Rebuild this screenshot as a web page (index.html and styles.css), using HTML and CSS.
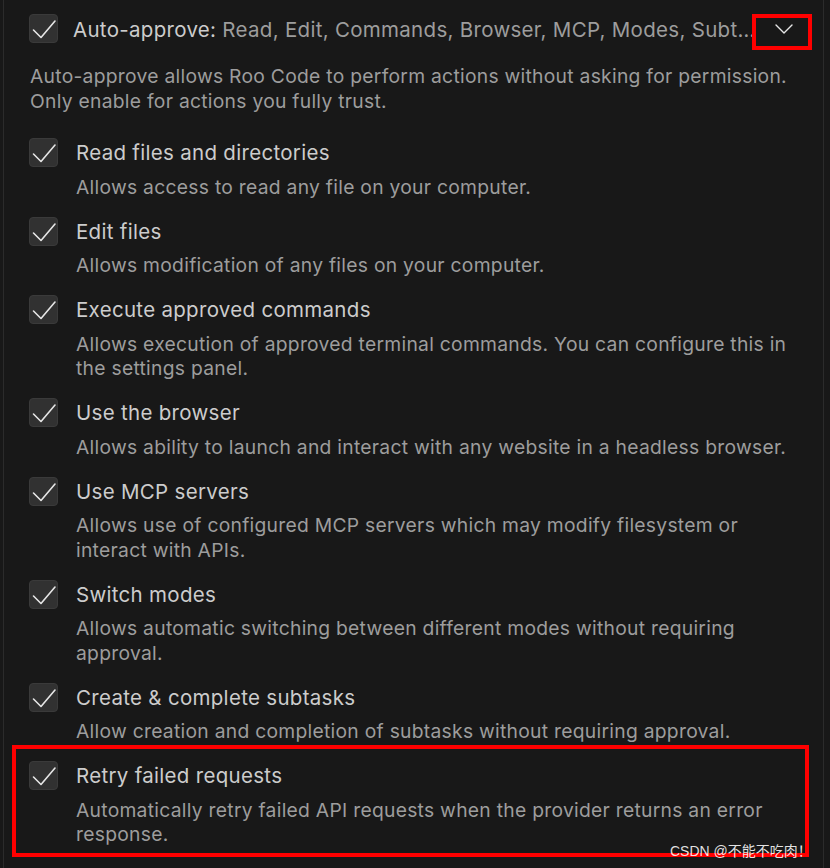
FILE: index.html
```html
<!DOCTYPE html>
<html lang="en">
<head>
<meta charset="utf-8">
<title>Auto-approve</title>
<link rel="stylesheet" href="styles.css">
</head>
<body>
<div class="panel">
  <div class="header">
    <span class="cb"><svg viewBox="0 0 29 29" width="29" height="29"><path d="M4.5 16 L12 23.5 L26 7" fill="none" stroke="#e6e6e6" stroke-width="1.6" stroke-linecap="round" stroke-linejoin="round"/></svg></span>
    <span class="summary"><span class="summary-label">Auto-approve:</span> Read, Edit, Commands, Browser, MCP, Modes, Subtasks, Retry</span>
    <button class="toggle" type="button"><svg viewBox="0 0 18 10" width="18" height="10"><path d="M1 1 L9 9 L17 1" fill="none" stroke="#e6e6e6" stroke-width="1.4" stroke-linecap="round" stroke-linejoin="round"/></svg></button>
  </div>
  <p class="intro">Auto-approve allows Roo Code to perform actions without asking for permission. Only enable for actions you fully trust.</p>
  <ul class="options">
    <li class="option">
      <span class="cb"><svg viewBox="0 0 29 29" width="29" height="29"><path d="M4.5 16 L12 23.5 L26 7" fill="none" stroke="#e6e6e6" stroke-width="1.6" stroke-linecap="round" stroke-linejoin="round"/></svg></span>
      <div class="option-body">
        <div class="option-title">Read files and directories</div>
        <div class="option-desc">Allows access to read any file on your computer.</div>
      </div>
    </li>
    <li class="option">
      <span class="cb"><svg viewBox="0 0 29 29" width="29" height="29"><path d="M4.5 16 L12 23.5 L26 7" fill="none" stroke="#e6e6e6" stroke-width="1.6" stroke-linecap="round" stroke-linejoin="round"/></svg></span>
      <div class="option-body">
        <div class="option-title">Edit files</div>
        <div class="option-desc">Allows modification of any files on your computer.</div>
      </div>
    </li>
    <li class="option">
      <span class="cb"><svg viewBox="0 0 29 29" width="29" height="29"><path d="M4.5 16 L12 23.5 L26 7" fill="none" stroke="#e6e6e6" stroke-width="1.6" stroke-linecap="round" stroke-linejoin="round"/></svg></span>
      <div class="option-body">
        <div class="option-title">Execute approved commands</div>
        <div class="option-desc">Allows execution of approved terminal commands. You can configure this in the settings panel.</div>
      </div>
    </li>
    <li class="option">
      <span class="cb"><svg viewBox="0 0 29 29" width="29" height="29"><path d="M4.5 16 L12 23.5 L26 7" fill="none" stroke="#e6e6e6" stroke-width="1.6" stroke-linecap="round" stroke-linejoin="round"/></svg></span>
      <div class="option-body">
        <div class="option-title">Use the browser</div>
        <div class="option-desc">Allows ability to launch and interact with any website in a headless browser.</div>
      </div>
    </li>
    <li class="option">
      <span class="cb"><svg viewBox="0 0 29 29" width="29" height="29"><path d="M4.5 16 L12 23.5 L26 7" fill="none" stroke="#e6e6e6" stroke-width="1.6" stroke-linecap="round" stroke-linejoin="round"/></svg></span>
      <div class="option-body">
        <div class="option-title">Use MCP servers</div>
        <div class="option-desc">Allows use of configured MCP servers which may modify filesystem or interact with APIs.</div>
      </div>
    </li>
    <li class="option">
      <span class="cb"><svg viewBox="0 0 29 29" width="29" height="29"><path d="M4.5 16 L12 23.5 L26 7" fill="none" stroke="#e6e6e6" stroke-width="1.6" stroke-linecap="round" stroke-linejoin="round"/></svg></span>
      <div class="option-body">
        <div class="option-title">Switch modes</div>
        <div class="option-desc">Allows automatic switching between different modes without requiring approval.</div>
      </div>
    </li>
    <li class="option">
      <span class="cb"><svg viewBox="0 0 29 29" width="29" height="29"><path d="M4.5 16 L12 23.5 L26 7" fill="none" stroke="#e6e6e6" stroke-width="1.6" stroke-linecap="round" stroke-linejoin="round"/></svg></span>
      <div class="option-body">
        <div class="option-title">Create &amp; complete subtasks</div>
        <div class="option-desc">Allow creation and completion of subtasks without requiring approval.</div>
      </div>
    </li>
    <li class="option option-highlight">
      <span class="cb"><svg viewBox="0 0 29 29" width="29" height="29"><path d="M4.5 16 L12 23.5 L26 7" fill="none" stroke="#e6e6e6" stroke-width="1.6" stroke-linecap="round" stroke-linejoin="round"/></svg></span>
      <div class="option-body">
        <div class="option-title">Retry failed requests</div>
        <div class="option-desc">Automatically retry failed API requests when the provider returns an error response.</div>
      </div>
    </li>
  </ul>
  <div class="watermark">CSDN @不能不吃肉！</div>
</div>
</body>
</html>
```

FILE: styles.css
```css
html, body {
  margin: 0;
  padding: 0;
  background: #181818;
}
body {
  font-family: Inter, "Noto Sans", sans-serif;
  -webkit-font-smoothing: antialiased;
}
.panel {
  position: relative;
  box-sizing: border-box;
  margin-left: 3px;
  width: 821px;
  min-height: 868px;
  border-left: 1px solid #2b2b2b;
  border-right: 1px solid #2b2b2b;
  padding: 14px 0 0 25px;
}
.cb {
  flex: 0 0 auto;
  box-sizing: border-box;
  width: 29px;
  height: 29px;
  border-radius: 4px;
  background: #313131;
  border: 1px solid #3a3a3a;
  display: flex;
}
.cb svg {
  display: block;
  margin: -1px;
}
.header {
  display: flex;
  align-items: flex-start;
  height: 29px;
}
.summary {
  flex: 1 1 auto;
  min-width: 0;
  margin-left: 15px;
  font-size: 20.5px;
  letter-spacing: 0.3px;
  line-height: 31px;
  color: #9d9d9d;
  white-space: nowrap;
  overflow: hidden;
  text-overflow: ellipsis;
}
.summary-label {
  color: #cccccc;
}
.toggle {
  flex: 0 0 auto;
  box-sizing: border-box;
  width: 52px;
  height: 28px;
  margin: 4px 15px 0 0;
  padding: 0 0 6px 4px;
  background: transparent;
  border: none;
  outline: 4px solid #ff0000;
  display: flex;
  align-items: center;
  justify-content: center;
}
.intro {
  margin: 21px 20px 0 1px;
  font-size: 19.3px;
  letter-spacing: 0.27px;
  line-height: 25px;
  color: #9d9d9d;
}
.options {
  list-style: none;
  margin: 24px 0 0 0;
  padding: 0;
  display: flex;
  flex-direction: column;
  gap: 17.5px;
}
.option {
  display: flex;
  align-items: flex-start;
  gap: 18px;
  padding-right: 20px;
}
.option-body {
  flex: 1 1 auto;
  min-width: 0;
}
.option-title {
  font-size: 20.5px;
  letter-spacing: 0.3px;
  line-height: 29px;
  color: #cccccc;
}
.option-desc {
  margin-top: 7.5px;
  font-size: 19.3px;
  letter-spacing: 0.27px;
  line-height: 24.5px;
  color: #9d9d9d;
}
.option-highlight {
  position: relative;
}
.option-highlight::after {
  content: "";
  position: absolute;
  left: -17px;
  right: 14px;
  top: -16.5px;
  bottom: -10px;
  border: 4px solid #ff0000;
  pointer-events: none;
}
.watermark {
  position: absolute;
  left: 666px;
  top: 841px;
  font-family: "Liberation Sans", "Noto Sans CJK SC", sans-serif;
  font-size: 14px;
  line-height: 20px;
  color: rgba(255, 255, 255, 0.88);
  white-space: nowrap;
}
```
